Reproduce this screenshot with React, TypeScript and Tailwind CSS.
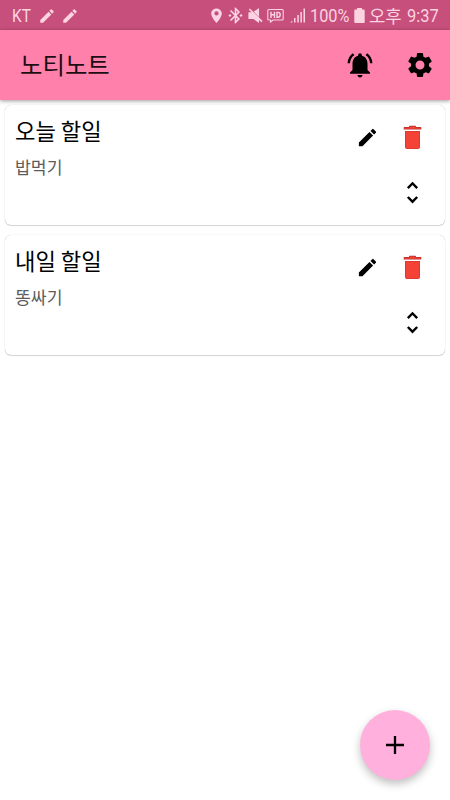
import React from "react";

const EDIT =
  "M3 17.25V21h3.75L17.81 9.94l-3.75-3.75L3 17.25zM20.71 7.04a1 1 0 0 0 0-1.41l-2.34-2.34a1 1 0 0 0-1.41 0l-1.83 1.83 3.75 3.75 1.83-1.83z";
const BELL =
  "M7.58 4.08L6.15 2.65C3.75 4.48 2.17 7.3 2.03 10.5h2a8.445 8.445 0 0 1 3.55-6.42zm12.39 6.42h2c-.15-3.2-1.73-6.02-4.12-7.85l-1.42 1.43a8.495 8.495 0 0 1 3.54 6.42zM18 11c0-3.07-1.64-5.64-4.5-6.32V4c0-.83-.67-1.5-1.5-1.5s-1.5.67-1.5 1.5v.68C7.63 5.36 6 7.92 6 11v5l-2 2v1h16v-1l-2-2v-5zm-6 11c1.1 0 2-.9 2-2h-4c0 1.1.9 2 2 2z";
const GEAR =
  "M19.14 12.94c.04-.3.06-.61.06-.94 0-.32-.02-.64-.07-.94l2.03-1.58a.49.49 0 0 0 .12-.61l-1.92-3.32a.488.488 0 0 0-.59-.22l-2.39.96c-.5-.38-1.03-.7-1.62-.94l-.36-2.54a.484.484 0 0 0-.48-.41h-3.84c-.24 0-.43.17-.47.41l-.36 2.54c-.59.24-1.13.57-1.62.94l-2.39-.96c-.22-.08-.47 0-.59.22L2.74 8.87c-.12.21-.08.47.12.61l2.03 1.58c-.05.3-.09.63-.09.94s.02.64.07.94l-2.03 1.58a.49.49 0 0 0-.12.61l1.92 3.32c.12.22.37.29.59.22l2.39-.96c.5.38 1.03.7 1.62.94l.36 2.54c.05.24.24.41.48.41h3.84c.24 0 .44-.17.47-.41l.36-2.54c.59-.24 1.13-.56 1.62-.94l2.39.96c.22.08.47 0 .59-.22l1.92-3.32c.12-.22.07-.47-.12-.61l-2.01-1.58zM12 15.6c-1.98 0-3.6-1.62-3.6-3.6s1.62-3.6 3.6-3.6 3.6 1.62 3.6 3.6-1.62 3.6-3.6 3.6z";
const UNFOLD =
  "M12 5.83L15.17 9l1.41-1.41L12 3 7.41 7.59 8.83 9 12 5.83zm0 12.34L8.83 15l-1.41 1.41L12 21l4.59-4.59L15.17 15 12 18.17z";
const PIN =
  "M12 2C8.13 2 4.500 5.13 4.500 9c0 5.250 7.500 13.500 7.500 13.500s7.500-8.250 7.500-13.500c0-3.870-3.630-7-7.500-7zm0 10a3 3 0 1 1 0-6 3 3 0 0 1 0 6z";
const BLUETOOTH =
  "M7 12l-2-2-2 2 2 2 2-2zm10.71-4.29L12 2h-1v7.59L6.41 5 5 6.41 10.59 12 5 17.59 6.41 19 11 14.41V22h1l5.71-5.71-4.3-4.29 4.3-4.29zM13 5.83l1.88 1.88L13 9.59V5.83zm1.88 10.46L13 18.17v-3.76l1.88 1.88zM19 10l-2 2 2 2 2-2-2-2z";
const MUTE =
  "M2 7.500h4.500L2.500 3.900 4.200 2.200 22 19.800l-1.700 1.700L17 18.500V22.500L9 17H2zM17 1.500V14L9.500 6.500z";

function Icon({ d, className }: { d: string; className: string }) {
  return (
    <svg viewBox="0 0 24 24" fill="currentColor" className={"shrink-0 " + className}>
      <path d={d} />
    </svg>
  );
}

function StatusBar() {
  return (
    <div className="flex h-[30px] items-center bg-[#c74f7b] pl-3 text-[#fbd3e1]">
      <span className="w-[26px] origin-left scale-x-[0.88] font-[Roboto] text-[17.5px] leading-[30px] whitespace-nowrap mt-[2px]">KT</span>
      <Icon d={EDIT} className="mt-px size-[18px]" />
      <Icon d={EDIT} className="mt-px ml-[5px] size-[18px]" />
      <Icon d={PIN} className="mt-px ml-[129px] size-[17px]" />
      <Icon d={BLUETOOTH} className="mt-px ml-px size-[19px]" />
      <Icon d={MUTE} className="mt-px ml-[2px] size-[17px]" />
      <svg viewBox="0 0 17 16" className="mt-[2px] ml-[3px] h-4 w-[17px] shrink-0" fill="none" stroke="currentColor">
        <path strokeWidth="1.1" d="M1.800 1.500h13.400q1 0 1 1v8.500q0 1-1 1H6l-2.500 2v-2H1.800q-1 0-1-1V2.500q0-1 1-1z" />
        <path strokeWidth="1.4" d="M4 3.700v6.200M7.500 3.700v6.200M4 6.800h3.500M10 4.400h1q2.200 0 2.200 2.400t-2.200 2.400h-1z" />
      </svg>
      <svg viewBox="0 0 17 16" className="ml-[6px] h-4 w-[17px] shrink-0" fill="currentColor">
        <path d="M.3 15.5l2-2v2zM4 11h1.500v4.500H4zM7.300 8h1.500v7.500H7.300zM10.400 5h1.500v10.500h-1.500zM13.500 1.500h1.500v14h-1.500z" />
      </svg>
      <span className="ml-[3px] w-[44px] origin-left scale-x-[0.93] font-[Roboto] text-[17.5px] leading-[30px] whitespace-nowrap mt-[2px]">100%</span>
      <svg viewBox="0 0 11 15" className="mt-px h-[15px] w-[11px] shrink-0" fill="currentColor">
        <path d="M3 0h5v1.500h1.700q1 0 1 1V14q0 1-1 1H1.300q-1 0-1-1V2.500q0-1 1-1H3z" />
      </svg>
      <span className="ml-1 w-[38px] shrink-0 font-['Noto_Sans_CJK_KR',sans-serif] text-[17.8px] leading-[30px] whitespace-nowrap">오후</span>
      <span className="origin-left scale-x-[0.94] font-[Roboto] text-[17.5px] leading-[30px] whitespace-nowrap mt-[2px]">9:37</span>
    </div>
  );
}

function NoteCard({ title, body }: { title: string; body: string }) {
  return (
    <article className="flex h-[120px] justify-between rounded-[6px] bg-white pl-[10px] shadow-[0_0_1px_rgba(0,0,0,0.28),0_1px_1px_rgba(0,0,0,0.15)]">
      <div>
        <h2 className="mt-[9px] text-[22.2px] leading-8 text-black">{title}</h2>
        <p className="mt-[9px] text-[17.2px] leading-6 text-[#5c5c5c]">{body}</p>
      </div>
      <div className="flex gap-[19px] pt-5 pr-[18px]">
        <Icon d={EDIT} className="mt-px size-[23px]" />
        <div className="flex w-[29px] flex-col items-center">
          <svg viewBox="0 0 19 25" className="h-[25px] w-[19px]">
            <path fill="#b92d28" d="M6 1.500q0-.700.700-.700h5.600q.700 0 .700.700V2h4.800q.500 0 .500.500v2H.700v-2q0-.500.500-.500H6z" />
            <path fill="#f44336" d="M6.500 1.500h6V2.700H18v1H1v-1h5.500z" />
            <path fill="#d6372f" d="M2 6h15v16q0 2-2 2H4q-2 0-2-2z" />
            <path fill="#f44336" d="M2.700 6.800h13.600v15.200q0 1.300-1.300 1.300H4q-1.300 0-1.300-1.300z" />
          </svg>
          <Icon d={UNFOLD} className="mt-[28px] size-[29px]" />
        </div>
      </div>
    </article>
  );
}

export default function App() {
  return (
    <div className="relative flex h-[800px] w-[450px] flex-col overflow-hidden bg-white font-['Noto_Sans_CJK_KR',sans-serif] text-black">
      <StatusBar />
      <header className="z-10 flex h-[70px] shrink-0 items-center bg-[#ff80aa] pr-[15px] pl-5 shadow-[0_1px_4px_rgba(0,0,0,0.4)]">
        <h1 className="flex-1 pb-[2px] text-[24.4px] leading-9 text-[#1c0e13]">노티노트</h1>
        <Icon d={BELL} className="size-[30px]" />
        <Icon d={GEAR} className="ml-[30px] size-[30px]" />
      </header>
      <main className="flex flex-col gap-[10px] p-[5px]">
        <NoteCard title="오늘 할일" body="밥먹기" />
        <NoteCard title="내일 할일" body="똥싸기" />
      </main>
      <button className="absolute right-5 bottom-5 flex size-[70px] items-center justify-center rounded-full bg-[#ffb0dc] shadow-[0_4px_8px_rgba(0,0,0,0.25)]">
        <svg viewBox="0 0 18 18" className="size-[18px]" stroke="#000" strokeWidth="2.300">
          <path d="M9 0v18M0 9h18" />
        </svg>
      </button>
    </div>
  );
}
